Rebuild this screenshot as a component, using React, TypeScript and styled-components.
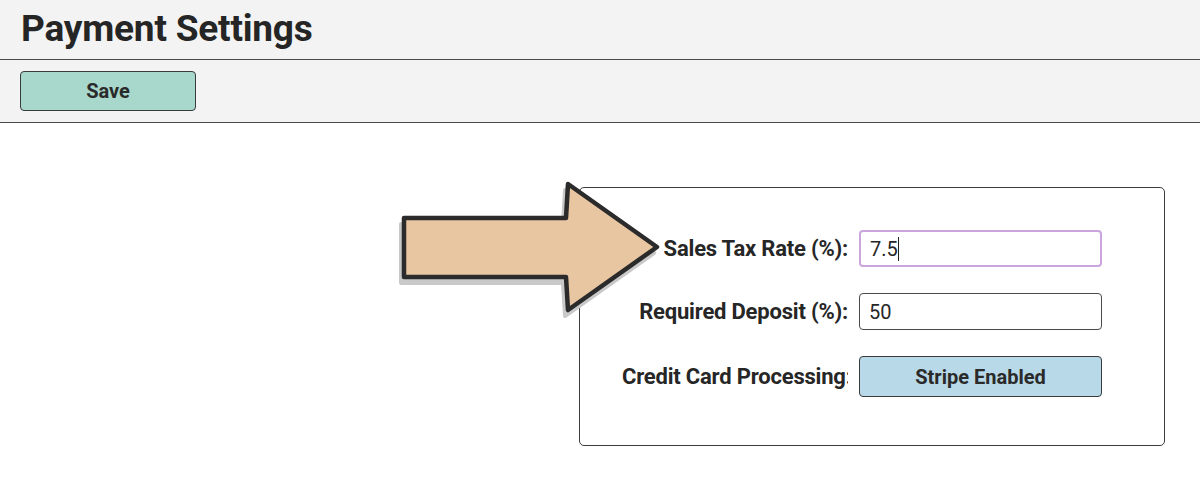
import styled, { createGlobalStyle } from "styled-components";

const GlobalStyle = createGlobalStyle`
  html, body {
    margin: 0;
    padding: 0;
    background: #ffffff;
    font-family: Roboto, "Liberation Sans", sans-serif;
    color: #262626;
  }
`;

const Page = styled.div`
  position: relative;
  width: 1200px;
  height: 490px;
  overflow: hidden;
`;

const TitleBar = styled.header`
  height: 59px;
  background: #f3f3f3;
  border-bottom: 1.5px solid #4a4a4a;
  display: flex;
  align-items: center;
  padding-left: 21px;
`;

const Title = styled.h1`
  margin: 0 0 2px;
  font-size: 37px;
  font-weight: 700;
  color: #252525;
  letter-spacing: -0.2px;
`;

const Toolbar = styled.div`
  height: 62px;
  background: #f3f3f3;
  border-bottom: 1.5px solid #4a4a4a;
  display: flex;
  align-items: center;
  padding-left: 20px;
`;

const Button = styled.button<{ $tone: string; $width: number; $height: number; $size: number }>`
  width: ${(p) => p.$width}px;
  height: ${(p) => p.$height}px;
  background: ${(p) => p.$tone};
  border: 1.5px solid #3a3a3a;
  border-radius: 4px;
  font-family: Roboto, "Liberation Sans", sans-serif;
  font-weight: 700;
  font-size: ${(p) => p.$size}px;
  color: #2a2a2a;
  padding: 0;
  cursor: pointer;
`;

const Body = styled.main`
  display: flex;
  padding: 64px 0 0 579px;
`;

const Card = styled.section`
  width: 586px;
  height: 259px;
  border: 1.5px solid #3d3d3d;
  border-radius: 5px;
  padding: 42px 0 0 42px;
  box-sizing: border-box;
`;

const Form = styled.div`
  display: grid;
  grid-template-columns: 226px 243px;
  column-gap: 11px;
  row-gap: 26px;
  align-items: center;
`;

const Label = styled.label`
  font-size: 22px;
  font-weight: 700;
  color: #262626;
  text-align: right;
  white-space: nowrap;
  overflow: hidden;
  letter-spacing: -0.2px;
`;

const Field = styled.div`
  position: relative;
  height: 37px;
`;

const Input = styled.input<{ $focused?: boolean }>`
  box-sizing: border-box;
  width: 243px;
  height: 37px;
  border: ${(p) => (p.$focused ? "2px solid #cba5de" : "1.5px solid #4a4a4a")};
  border-radius: 4px;
  padding: 0 9px;
  font-family: Roboto, "Liberation Sans", sans-serif;
  font-size: 20px;
  color: #262626;
  background: #fff;
  outline: none;
  caret-color: transparent;
`;

const CaretLine = styled.div`
  position: absolute;
  inset: 0;
  padding: 0 11px;
  display: flex;
  align-items: center;
  font-size: 20px;
  pointer-events: none;
  & > span:first-child {
    visibility: hidden;
  }
`;

const Caret = styled.span`
  width: 1.5px;
  height: 24px;
  background: #222;
`;

const ArrowLayer = styled.svg`
  position: absolute;
  left: 396px;
  top: 176px;
  pointer-events: none;
`;

function Arrow() {
  const d = "M8 42 L170 42 L172 8 L261 71 L172 134 L170 101 L8 101 Z";
  return (
    <ArrowLayer width="280" height="150" viewBox="0 0 280 150">
      <path d={d} transform="translate(-3 6)" fill="#c9c9c9" stroke="#c9c9c9" strokeWidth="4" strokeLinejoin="round" />
      <path d={d} fill="#e9c6a2" stroke="#2b2b2b" strokeWidth="4.5" strokeLinejoin="round" />
    </ArrowLayer>
  );
}

export default function App() {
  return (
    <Page>
      <GlobalStyle />
      <TitleBar>
        <Title>Payment Settings</Title>
      </TitleBar>
      <Toolbar>
        <Button $tone="#a8d8cb" $width={176} $height={40} $size={20}>Save</Button>
      </Toolbar>
      <Body>
        <Card>
          <Form>
            <Label>Sales Tax Rate (%):</Label>
            <Field>
              <Input $focused defaultValue="7.5" />
              <CaretLine>
                <span>7.5</span>
                <Caret />
              </CaretLine>
            </Field>
            <Label>Required Deposit (%):</Label>
            <Field>
              <Input defaultValue="50" />
            </Field>
            <Label>Credit Card Processing:</Label>
            <Button $tone="#b8d9e8" $width={243} $height={41} $size={20}>Stripe Enabled</Button>
          </Form>
        </Card>
      </Body>
      <Arrow />
    </Page>
  );
}
